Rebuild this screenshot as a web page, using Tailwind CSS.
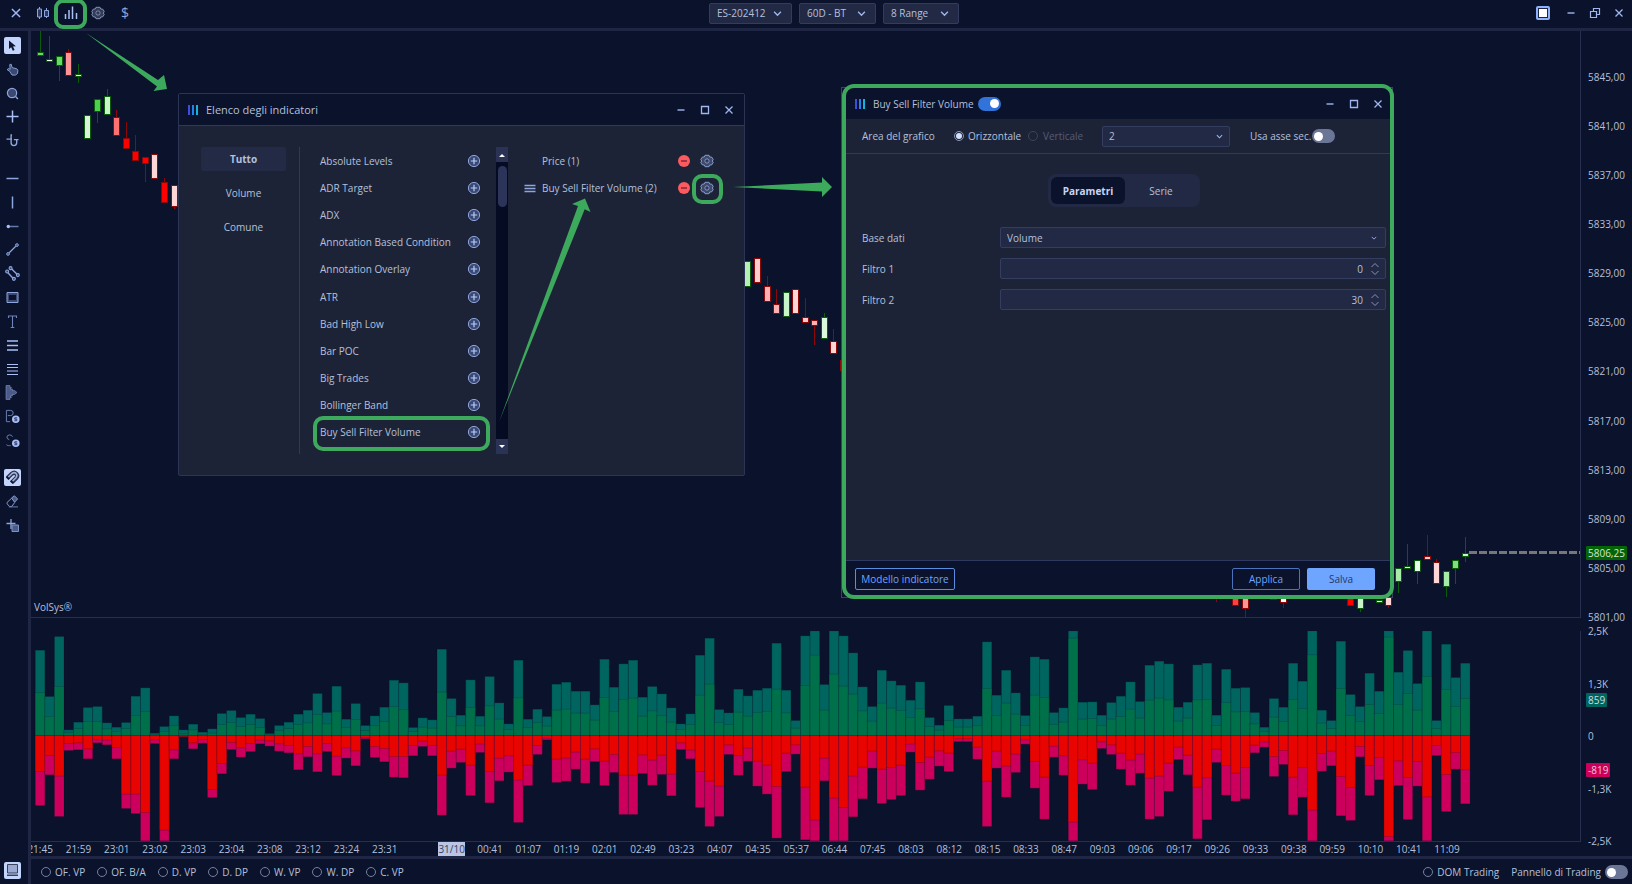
<!DOCTYPE html>
<html lang="it">
<head>
    <meta charset="UTF-8">
    <meta name="viewport" content="width=device-width, initial-scale=1.0">
    <title>VolSys</title>
    <script src="https://cdn.jsdelivr.net/npm/@tailwindcss/browser@4"></script>
</head>

<body class="relative flex h-screen flex-col overflow-hidden bg-[#0b122b] font-['Open_Sans','Noto_Sans',sans-serif] text-[10px] leading-[14px] text-[#b4c0dc]">

    <!-- shared icons -->
    <svg class="hidden">
        <symbol id="i-close" viewBox="0 0 12 12"><path d="M2.5 2.5l7 7M9.5 2.5l-7 7" fill="none" stroke="currentColor" stroke-width="1.3"/></symbol>
        <symbol id="i-min" viewBox="0 0 12 12"><path d="M2.5 6h7" fill="none" stroke="currentColor" stroke-width="1.4"/></symbol>
        <symbol id="i-max" viewBox="0 0 12 12"><path d="M2.5 2.5h7v7h-7z" fill="none" stroke="currentColor" stroke-width="1.3"/></symbol>
        <symbol id="i-down" viewBox="0 0 8 8"><path d="M1 2.5l3 3 3-3" fill="none" stroke="currentColor" stroke-width="1.2"/></symbol>
        <symbol id="i-gear" viewBox="0 0 14 14">
            <path d="M5 1.300h4l.8 1.700 2 .2 1.400 2.300-.9 1.500.9 1.500-1.400 2.300-2 .2-.8 1.700H5l-.8-1.700-2-.2L.8 8.500 1.700 7 .8 5.500l1.400-2.300 2-.2z" fill="currentColor" fill-opacity=".3" stroke="currentColor" stroke-width=".9" stroke-linejoin="round"/>
            <circle cx="7" cy="7" r="2.100" fill="#141a32" stroke="currentColor" stroke-width=".9"/>
            <circle cx="7" cy="7" r=".6" fill="currentColor"/>
        </symbol>
        <symbol id="i-add" viewBox="0 0 14 14">
            <circle cx="7" cy="7" r="5.6" fill="#3a4874" stroke="#8ea6de"/>
            <path d="M7 3.8v6.4M3.8 7h6.4" stroke="#b9cdfb" stroke-width="1.2"/>
        </symbol>
        <symbol id="i-remove" viewBox="0 0 14 14">
            <circle cx="7" cy="7" r="6" fill="#fb5a5f"/>
            <path d="M4 7h6" stroke="#7c2434" stroke-width="1.4"/>
        </symbol>
        <symbol id="i-logo" viewBox="0 0 12 12">
            <path d="M2 1v10" stroke="#3a4fe0" stroke-width="2"/>
            <path d="M6 1v10" stroke="#2383ea" stroke-width="2"/>
            <path d="M10 1v10" stroke="#12b4dc" stroke-width="2"/>
        </symbol>
    </svg>

    <header class="flex h-[31px] shrink-0 items-center border-b-[3px] border-[#1f2644] pb-[2px] text-[#9fb6ee]">
        <div class="flex w-[calc(50%-107px)] items-center pl-[9px]">
            <button aria-label="Chiudi" class="mr-[13px]"><svg class="size-[14px]"><use href="#i-close"/></svg></button>
            <button aria-label="Tipo grafico" class="mr-[14px]">
                <svg class="size-[14px]" viewBox="0 0 14 14"><path d="M3.5 1v12M10.5 2v10" stroke="#8ea6de"/><path d="M1.5 3h4v8h-4zM8.5 4.500h4v6h-4z" fill="#2c3a66" stroke="#8ea6de"/></svg>
            </button>
            <button aria-label="Indicatori" class="mr-[13px]">
                <svg class="size-[14px]" viewBox="0 0 14 14"><path d="M1.500 8v5M5 4v9M8.500 .5V13M12.500 7v6" stroke="#a9c0f7" stroke-width="1.500"/></svg>
            </button>
            <button aria-label="Impostazioni" class="mr-[13px] text-[#8f9bbd]"><svg class="size-[14px]"><use href="#i-gear"/></svg></button>
            <button aria-label="Conto" class="w-[14px] text-[14px] leading-[14px] text-[#8ea6de]">$</button>
        </div>
        <div class="flex gap-[7px]">
            <button class="flex h-[21px] w-[83px] items-center justify-between rounded-[2px] border border-[#333c5e] bg-[#222944] px-[7px] text-[#b4c0dc]">ES-202412 <svg class="mr-[2px] size-[9px] text-[#9fb6ee]"><use href="#i-down"/></svg></button>
            <button class="flex h-[21px] w-[77px] items-center justify-between rounded-[2px] border border-[#333c5e] bg-[#222944] px-[7px] text-[#b4c0dc]">60D - BT <svg class="mr-[2px] size-[9px] text-[#9fb6ee]"><use href="#i-down"/></svg></button>
            <button class="flex h-[21px] w-[76px] items-center justify-between rounded-[2px] border border-[#333c5e] bg-[#222944] px-[7px] text-[#b4c0dc]">8 Range <svg class="mr-[2px] size-[9px] text-[#9fb6ee]"><use href="#i-down"/></svg></button>
        </div>
        <div class="ml-auto flex items-center gap-3 pr-[7px]">
            <button aria-label="Layout" class="mr-[3px]"><svg class="size-[14px]" viewBox="0 0 14 14"><rect width="14" height="14" rx="2" fill="#8fb0fa"/><path d="M2 2h10v10H2z" fill="#1c2340"/><path d="M3 3h8v8H3z" fill="#fff"/></svg></button>
            <button aria-label="Riduci"><svg class="size-3"><use href="#i-min"/></svg></button>
            <button aria-label="Ripristina"><svg class="size-3" viewBox="0 0 12 12"><path d="M1.500 4.500h6v6h-6zM4.500 4V1.500h6v6H8" fill="none" stroke="currentColor" stroke-width="1.200"/></svg></button>
            <button aria-label="Chiudi finestra"><svg class="size-3"><use href="#i-close"/></svg></button>
        </div>
    </header>

    <div class="flex min-h-0 flex-1">

        <nav class="flex w-[31px] shrink-0 flex-col border-r-[3px] border-[#1f2644] pt-1 pb-[3px] pl-[2px] text-[#8ea6de]">
            <div class="flex h-[116px] flex-col justify-between">
                <button aria-label="Puntatore" class="grid size-[21px] place-items-center"><svg class="size-[17px]" viewBox="0 0 17 17"><rect width="17" height="17" rx="2" fill="#c3d5fd"/><path d="M5 3.500v8.500l2.200-1.800 1.600 3.500 1.800-.8-1.600-3.400 2.900-.3z" fill="#10162e"/></svg></button>
                <button aria-label="Mano" class="grid size-[21px] place-items-center"><svg class="size-[13px]" viewBox="0 0 14 14"><path d="M4 9L1.200 7.200 2.500 6l2 .8-.5-5 1.500-.6L6.600 5l5 1.200 1.200 1.600-.4 3.500-2.200 1.700H6.500z" fill="#3b4870" stroke="currentColor"/></svg></button>
                <button aria-label="Zoom" class="grid size-[21px] place-items-center"><svg class="size-[13px]" viewBox="0 0 14 14"><circle cx="6.500" cy="6.500" r="5" fill="#3b4870" stroke="currentColor" stroke-width="1.300"/><path d="M10.300 10.300l2.500 2.500" stroke="currentColor" stroke-width="1.500"/></svg></button>
                <button aria-label="Croce" class="grid size-[21px] place-items-center"><svg class="size-[13px]" viewBox="0 0 13 13"><path d="M6.500 .5v12M.5 6.500h12" stroke="#a9c0f7" stroke-width="1.500"/></svg></button>
                <button aria-label="Croce magnetica" class="grid size-[21px] place-items-center"><svg class="size-[13px]" viewBox="0 0 14 14"><path d="M.5 5.500h6M5.500 .5v9a3 3 0 0 0 6 0V6M8.500 6h5M5 1h1.500" fill="none" stroke="currentColor" stroke-width="1.500"/></svg></button>
            </div>
            <div class="mt-[17px] flex h-[283px] flex-col justify-between">
                <button aria-label="Linea orizzontale" class="grid size-[21px] place-items-center"><svg class="size-[13px]" viewBox="0 0 13 13"><path d="M.5 6.500h12" stroke="currentColor" stroke-width="1.500"/></svg></button>
                <button aria-label="Linea verticale" class="grid size-[21px] place-items-center"><svg class="size-[13px]" viewBox="0 0 13 13"><path d="M6.500 .5v12" stroke="currentColor" stroke-width="1.500"/></svg></button>
                <button aria-label="Semiretta" class="grid size-[21px] place-items-center"><svg class="size-[13px]" viewBox="0 0 13 13"><path d="M3 6.500h9.500" stroke="#6579ad" stroke-width="1.500"/><circle cx="2.300" cy="6.500" r="1.700" fill="#a9c0f7"/></svg></button>
                <button aria-label="Segmento" class="grid size-[21px] place-items-center"><svg class="size-[13px]" viewBox="0 0 14 14"><path d="M3.500 10.500l7-7" stroke="currentColor" stroke-width="1.300"/><circle cx="2.200" cy="11.800" r="1.500" fill="#3b4870" stroke="currentColor"/><circle cx="11.800" cy="2.200" r="1.500" fill="#3b4870" stroke="currentColor"/></svg></button>
                <button aria-label="Canale" class="grid size-[21px] place-items-center"><svg class="size-[15px]" viewBox="0 0 14 14"><path d="M2.500 6l5 5.500M6 2.500l5.500 5.500" stroke="currentColor" stroke-width="1.300"/><g fill="#3b4870" stroke="currentColor"><circle cx="2" cy="5.200" r="1.400"/><circle cx="8.300" cy="12" r="1.400"/><circle cx="5.200" cy="2" r="1.400"/><circle cx="12" cy="8.500" r="1.400"/></g></svg></button>
                <button aria-label="Rettangolo" class="grid size-[21px] place-items-center"><svg class="size-[13px]" viewBox="0 0 13 13"><path d="M1 1.500h11v10H1z" fill="#3b4870" stroke="currentColor"/><path d="M3 4h7v5H3z" fill="#0b122b"/></svg></button>
                <button aria-label="Testo" class="grid size-[21px] place-items-center"><svg class="size-[13px]" viewBox="0 0 13 13"><path d="M2.500 3V1h8v2M6.500 1v11.500M4.700 12.500h3.600" fill="none" stroke="#6f84bb" stroke-width="1.100"/></svg></button>
                <button aria-label="Livelli" class="grid size-[21px] place-items-center"><svg class="size-[13px]" viewBox="0 0 13 13"><path d="M1 2h11M1 6.500h11M1 11h11" stroke="#a9c0f7" stroke-width="1.400"/></svg></button>
                <button aria-label="Fibonacci" class="grid size-[21px] place-items-center"><svg class="size-[13px]" viewBox="0 0 13 13"><path d="M1 1.500h11M1 4.500h11M1 8h11M1 11.500h11" stroke="#a9c0f7" stroke-width="1.200"/></svg></button>
                <button aria-label="Profilo volume" class="grid size-[21px] place-items-center"><svg class="size-[15px]" viewBox="0 0 15 15"><path d="M1 .5h4v2h1.500L5 4h2.500L7 5.500h2.500L12 7.500 9.500 9.500H7l.5 1.500H5l1.500 1.500H5v2H1z" fill="#4c5a86" stroke="#7c92cc" stroke-width=".6"/></svg></button>
                <button aria-label="Compra" class="grid size-[21px] place-items-center"><svg class="size-[15px]" viewBox="0 0 16 16"><path d="M1.500 13.500v-12h4.500a2.700 2.700 0 0 1 0 5.500H3M1.500 13.500h4" fill="none" stroke="#6f84bb"/><circle cx="11.500" cy="11" r="4" fill="#a9c0f7"/><path d="M13 9.400h-2.600v1.500h2.200v1.600h-2.600" fill="none" stroke="#27345f"/></svg></button>
                <button aria-label="Vendi" class="grid size-[21px] place-items-center"><svg class="size-[15px]" viewBox="0 0 16 16"><path d="M8 4a3 2.500 0 1 0-3.500 3M1.500 12.500c1 1 3 1.200 4.500.8" fill="none" stroke="#6f84bb"/><circle cx="11.500" cy="11" r="4" fill="#a9c0f7"/><path d="M13 9.400h-2.600v1.500h2.200v1.600h-2.600" fill="none" stroke="#27345f"/></svg></button>
            </div>
            <div class="mt-4 flex h-[69px] flex-col justify-between">
                <button aria-label="Calamita" class="grid size-[21px] place-items-center"><svg class="size-[17px]" viewBox="0 0 17 17"><rect width="17" height="17" rx="2" fill="#c3d5fd"/><path d="M3.500 9l4.200-4.200c3.300-2.800 7.300 1 4.500 4.300L8 13.300" fill="none" stroke="#2b3252" stroke-width="4.200"/><path d="M4 8.500l4-4c3.300-2.300 6.300 1 4 4.300l-4 4" fill="none" stroke="#a3b0d4" stroke-width="1.600"/><path d="M2.500 7.600l2.600 2.600M6.700 11.700l2.600 2.600" stroke="#10162e" stroke-width="2"/></svg></button>
                <button aria-label="Gomma" class="grid size-[21px] place-items-center"><svg class="size-[13px]" viewBox="0 0 14 14"><path d="M6 3.200L9 .8l3.500 3.500-3.300 3.500z" fill="#4c5a86" stroke="currentColor"/><path d="M6 3.500L1.200 8v1.500L4 12.500h2L9.500 8" fill="none" stroke="currentColor"/><path d="M3 12.800h10" stroke="#6f84bb"/></svg></button>
                <button aria-label="Gestione oggetti" class="grid size-[21px] place-items-center"><svg class="size-[13px]" viewBox="0 0 13 13"><path d="M5 0v10M.5 4.500h9" stroke="currentColor" stroke-width="1.300"/><path d="M6 6h6.500v6.500H6z" fill="#4c5a86" stroke="#7c92cc"/></svg></button>
            </div>
            <button aria-label="Pannello" class="mt-auto grid size-[21px] place-items-center"><svg class="size-[17px]" viewBox="0 0 17 17"><rect width="17" height="17" rx="2" fill="#c3d5fd"/><path d="M3.500 2.500h10v8.500h-10z" fill="#9aa9d2" stroke="#39415f"/><path d="M3 12.500h11V14H3z" fill="#39415f"/></svg></button>
        </nav>

        <main class="flex min-w-0 flex-1 flex-col">
            <div class="flex min-h-0 flex-1">
                <div class="flex min-w-0 flex-1 flex-col">
                    <section class="relative min-h-0 flex-1 border-r border-b border-[#262f50]">
                        <svg id="price" class="absolute size-full" viewBox="31 31 1549 586" preserveAspectRatio="none" shape-rendering="crispEdges">
                            <path d="M1469 552.500H1580" stroke="#77777a" stroke-width="3" stroke-dasharray="8 2"/>
                        </svg>
                        <p class="absolute bottom-[3px] left-[3px]">VolSys®</p>
                    </section>
                    <section class="pt-[13px]">
                        <svg id="volume" class="h-[211px] w-full border-r border-b border-[#262f50]" viewBox="31 631 1549 210" preserveAspectRatio="none"></svg>
                    </section>
                    <div class="h-[14px] overflow-hidden">
                        <div id="times" class="-ml-[10px] flex leading-[14px]"></div>
                    </div>
                </div>
                <div class="flex w-[51px] shrink-0 flex-col pb-2">
                    <div class="relative min-h-0 flex-1">
                        <ul id="prices" class="flex h-full flex-col justify-between pt-[39px] pl-[7px]"></ul>
                        <span class="absolute top-[515px] left-[5px] rounded-[1px] bg-[#056405] px-[2px] text-[#d3e6d3]">5806,25</span>
                    </div>
                    <div class="relative">
                        <ul class="flex h-[224px] flex-col justify-between pl-[7px]">
                            <li>2,5K</li>
                            <li>1,3K</li>
                            <li>0</li>
                            <li>-1,3K</li>
                            <li>-2,5K</li>
                        </ul>
                        <span class="absolute top-[69px] left-[5px] rounded-[1px] bg-[#00645f] px-[2px] text-[#c9dde0]">859</span>
                        <span class="absolute top-[139px] left-[5px] rounded-[1px] bg-[#cc005c] px-[2px] text-[#f0c4d8]">-819</span>
                    </div>
                </div>
            </div>

            <footer class="flex h-[28px] shrink-0 items-center border-t-[3px] border-[#1f2644] pr-1 pl-[10px] pt-[1px]">
                <div id="profiles" class="flex gap-3"></div>
                <label class="mr-3 ml-auto flex items-center gap-1"><input type="radio" name="dom" class="size-[10px] appearance-none rounded-full border border-[#7480a3]">DOM Trading</label>
                <label class="flex items-center gap-1">Pannello di Trading
                    <input type="checkbox" class="flex h-[14px] w-[23px] appearance-none items-center rounded-full bg-[#6b7697] px-[2px] before:size-[9px] before:rounded-full before:bg-white">
                </label>
            </footer>
        </main>
    </div>

    <!-- indicator list window -->
    <section class="absolute top-[93px] left-[178px] flex h-[383px] w-[567px] flex-col rounded-[2px] border border-[#2b3454] bg-[#1d2337]">
        <div class="flex h-8 shrink-0 items-center border-b border-[#2f3960] bg-[#0b122b] pr-[9px] pl-[8px]">
            <svg class="size-3"><use href="#i-logo"/></svg>
            <h2 class="ml-[7px] text-[11px]">Elenco degli indicatori</h2>
            <div class="ml-auto flex gap-3 text-[#9fb6ee]">
                <button aria-label="Riduci"><svg class="size-3"><use href="#i-min"/></svg></button>
                <button aria-label="Ingrandisci"><svg class="size-3"><use href="#i-max"/></svg></button>
                <button aria-label="Chiudi"><svg class="size-3"><use href="#i-close"/></svg></button>
            </div>
        </div>
        <div class="flex min-h-0 flex-1 pt-[21px] pb-[21px] pl-[22px]">
            <div class="flex w-[99px] flex-col gap-[10px] border-r border-[#2f3858] pr-[13px]">
                <button class="h-6 rounded-[2px] bg-[#232a45] font-bold">Tutto</button>
                <button class="h-6">Volume</button>
                <button class="h-6">Comune</button>
            </div>
            <ul id="indicators" class="ml-5 flex h-[299px] w-[161px] flex-col"></ul>
            <div class="ml-[15px] flex w-3 flex-col bg-[#060b24]">
                <button aria-label="Su" class="grid h-[15px] place-items-center bg-[#2a3356]"><svg class="size-[6px]" viewBox="0 0 6 6"><path d="M0 5l3-3 3 3z" fill="#fff"/></svg></button>
                <div class="mx-auto mt-1 h-[41px] w-[9px] rounded-full bg-[#2c3559]"></div>
                <button aria-label="Giù" class="mt-auto grid h-[15px] place-items-center bg-[#2a3356]"><svg class="size-[6px]" viewBox="0 0 6 6"><path d="M0 1l3 3 3-3z" fill="#fff"/></svg></button>
            </div>
            <ul class="ml-4 w-[190px]">
                <li class="flex h-[27px] items-center pl-[18px]">
                    Price (1)
                    <button aria-label="Rimuovi" class="ml-auto"><svg class="size-[14px]"><use href="#i-remove"/></svg></button>
                    <button aria-label="Impostazioni" class="ml-[9px] text-[#8ea6de]"><svg class="size-[14px]"><use href="#i-gear"/></svg></button>
                </li>
                <li class="flex h-[27px] items-center">
                    <svg class="mr-[6px] size-3" viewBox="0 0 12 12"><path d="M.5 3.500h11M.5 6.500h11M.5 9.500h11" stroke="#8ea6de" stroke-width="1.300"/></svg>
                    Buy Sell Filter Volume (2)
                    <button aria-label="Rimuovi" class="ml-auto"><svg class="size-[14px]"><use href="#i-remove"/></svg></button>
                    <button aria-label="Impostazioni" class="ml-[9px] text-[#8ea6de]"><svg class="size-[14px]"><use href="#i-gear"/></svg></button>
                </li>
            </ul>
        </div>
    </section>

    <!-- indicator settings window -->
    <section class="absolute top-[87px] left-[841px] flex h-[511px] w-[552px] flex-col border border-[#3a4360] bg-[#1d2337]">
        <div class="flex h-[31px] shrink-0 items-center bg-[#0b122b] pr-[8px] pl-3">
            <svg class="size-3"><use href="#i-logo"/></svg>
            <label for="enabled" class="ml-[7px]">Buy Sell Filter Volume</label>
            <input id="enabled" type="checkbox" checked class="ml-1 flex h-[14px] w-[23px] appearance-none items-center justify-end rounded-full bg-[#3173d8] px-[2px] before:size-[9px] before:rounded-full before:bg-white">
            <div class="ml-auto flex gap-3 text-[#9fb6ee]">
                <button aria-label="Riduci"><svg class="size-3"><use href="#i-min"/></svg></button>
                <button aria-label="Ingrandisci"><svg class="size-3"><use href="#i-max"/></svg></button>
                <button aria-label="Chiudi"><svg class="size-3"><use href="#i-close"/></svg></button>
            </div>
        </div>
        <div class="flex h-[35px] shrink-0 items-center border-b border-[#2f3960] pl-5">
            <span class="w-[92px]">Area del grafico</span>
            <label class="flex w-[74px] items-center gap-1"><input type="radio" name="area" checked class="grid size-[10px] appearance-none place-items-center rounded-full border border-[#8b96b5] before:size-[6px] before:rounded-full before:bg-[#d5e0ff]">Orizzontale</label>
            <label class="flex w-[74px] items-center gap-[5px] text-[#545c76]"><input type="radio" name="area" disabled class="size-[10px] appearance-none rounded-full border border-[#3b435e]">Verticale</label>
            <div class="flex h-[21px] w-[128px] items-center rounded-[2px] border border-[#333d60] bg-[#222944] px-[6px]">
                <select aria-label="Area" class="flex-1 appearance-none bg-transparent"><option>2</option></select>
                <svg class="size-[7px] text-[#9fb6ee]"><use href="#i-down"/></svg>
            </div>
            <label class="ml-5 flex items-center gap-[1px]">Usa asse sec.
                <input type="checkbox" class="flex h-[14px] w-[23px] appearance-none items-center rounded-full bg-[#6b7697] px-[2px] before:size-[9px] before:rounded-full before:bg-white">
            </label>
        </div>
        <div class="flex-1 pr-[6px] pl-5">
            <div class="mx-auto mt-5 flex w-[152px] rounded-[8px] bg-[#222944] p-[3px]">
                <button class="h-[27px] w-[74px] rounded-[6px] bg-[#0b122b] font-bold text-[#c9d5f2]">Parametri</button>
                <button class="h-[27px] flex-1">Serie</button>
            </div>
            <div class="mt-5 grid grid-cols-[138px_1fr] items-center gap-y-[10px]">
                <label for="base">Base dati</label>
                <div class="flex h-[21px] items-center rounded-[2px] border border-[#333d60] bg-[#222944] pr-[8px] pl-[6px]">
                    <select id="base" class="flex-1 appearance-none bg-transparent"><option>Volume</option></select>
                    <svg class="size-[6px] text-[#9fb6ee]"><use href="#i-down"/></svg>
                </div>
                <label for="f1">Filtro 1</label>
                <div class="flex h-[21px] items-center rounded-[2px] border border-[#333d60] bg-[#222944] pr-[6px]">
                    <input id="f1" value="0" inputmode="numeric" class="min-w-0 flex-1 bg-transparent pr-[8px] text-right">
                    <svg class="h-3 w-[8px]" viewBox="0 0 8 12"><path d="M.5 4l3.500-3.500L7.500 4M.5 8L4 11.500 7.500 8" fill="none" stroke="#8592b8"/></svg>
                </div>
                <label for="f2">Filtro 2</label>
                <div class="flex h-[21px] items-center rounded-[2px] border border-[#333d60] bg-[#222944] pr-[6px]">
                    <input id="f2" value="30" inputmode="numeric" class="min-w-0 flex-1 bg-transparent pr-[8px] text-right">
                    <svg class="h-3 w-[8px]" viewBox="0 0 8 12"><path d="M.5 4l3.500-3.500L7.500 4M.5 8L4 11.500 7.500 8" fill="none" stroke="#8592b8"/></svg>
                </div>
            </div>
        </div>
        <div class="flex h-[37px] shrink-0 gap-[7px] border-t border-[#2f3960] bg-[#0b122b] pt-[7px] pr-[17px] pl-[13px] text-[#6ea5ff]">
            <button class="mr-auto h-[22px] w-[100px] rounded-[2px] border border-[#5a8de0]">Modello indicatore</button>
            <button class="h-[22px] w-[68px] rounded-[2px] border border-[#4a73bb]">Applica</button>
            <button class="h-[22px] w-[68px] rounded-[2px] bg-[#6ea5ff] text-[#26365f]">Salva</button>
        </div>
    </section>

    <!-- highlights and arrows -->
    <div class="pointer-events-none absolute -top-px left-[54px] h-[30px] w-[33px] rounded-[9px] border-4 border-[#3da95c]"></div>
    <div class="pointer-events-none absolute top-[416px] left-[313px] h-[35px] w-[177px] rounded-[10px] border-4 border-[#3da95c]"></div>
    <div class="pointer-events-none absolute top-[174px] left-[692px] h-[30px] w-[31px] rounded-[10px] border-4 border-[#3da95c]"></div>
    <div class="pointer-events-none absolute top-[84px] left-[842px] h-[515px] w-[552px] rounded-[12px] border-4 border-[#3da95c]"></div>
    <svg class="pointer-events-none absolute top-0 left-0 h-[500px] w-[850px]" viewBox="0 0 850 500" fill="#3da95c">
        <path d="M86 33L158 80l6-5 3 14-13.500 2 3.500-4.500z"/>
        <path d="M499 422L578 206l-6-2 13-5.500 5.500 13.500-5.800-2.700z"/>
        <path d="M733 187L822 182.500V177l10 10-10 10v-5.500z"/>
    </svg>

    <script>
        const ns = "http://www.w3.org/2000/svg";
        const step = 9.565, left = 35.3;

        function rect(svg, x, y, w, h, fill, stroke) {
            const r = document.createElementNS(ns, "rect");
            r.setAttribute("x", x);
            r.setAttribute("y", y);
            r.setAttribute("width", w);
            r.setAttribute("height", h);
            r.setAttribute("fill", fill);
            if (stroke) r.setAttribute("stroke", stroke);
            svg.appendChild(r);
        }

        // slot, body top, body bottom, wick top, wick bottom, fill, up
        const candles = [
            [0, 52, 55, 30, 55, "#66d966", 1], [1, 59, 61, 36, 61, "#e6ffe6", 1], [2, 56, 65, 56, 81, "#66d966", 1],
            [3, 52, 75, 49, 75, "#ff9494", 0], [4, 74, 76, 64, 83, "#e6ffe6", 1], [5, 115, 138, 115, 138, "#d9f5d9", 1],
            [6, 99, 111, 99, 123, "#4dd04d", 1], [7, 96, 114, 89, 114, "#c8f5c8", 1], [8, 117, 135, 110, 135, "#ff7070", 0],
            [9, 138, 148, 122, 148, "#ff0000", 0], [10, 151, 160, 135, 160, "#ff0000", 0], [11, 157, 163, 157, 182, "#ff0000", 0],
            [12, 154, 178, 154, 178, "#ffd6d6", 0], [13, 182, 202, 178, 202, "#ff0000", 0], [14, 185, 206, 185, 209, "#ffd6d6", 0],
            [74, 261, 286, 261, 286, "#b5efb5", 1], [75, 258, 282, 258, 282, "#ffcfcf", 0], [76, 286, 301, 276, 301, "#ffb0b0", 0],
            [77, 304, 313, 289, 313, "#ffb0b0", 0], [78, 292, 316, 292, 316, "#c8f5c8", 1], [79, 289, 313, 289, 313, "#ffd6d6", 0],
            [80, 317, 322, 298, 322, "#ffc8c8", 0], [81, 320, 325, 320, 345, "#ffb0b0", 0], [82, 317, 338, 313, 338, "#daf8da", 1],
            [83, 341, 353, 329, 353, "#ffd6d6", 0], [84, 360, 370, 356, 381, "#ff7070", 0], [123, 580, 590, 580, 602, "#ff0000", 0],
            [125, 590, 605, 590, 605, "#ff4040", 0], [126, 590, 608, 590, 617, "#ff9494", 0], [129, 590, 599, 590, 599, "#ff4040", 0],
            [130, 590, 602, 590, 608, "#ffffff", 0], [137, 590, 605, 590, 605, "#ff0000", 0], [138, 590, 608, 590, 612, "#c8f5c8", 1],
            [140, 600, 602, 600, 602, "#e6ffe6", 1], [141, 590, 605, 590, 608, "#ffd6d6", 0], [142, 568, 581, 568, 593, "#a8eaa8", 1],
            [143, 566, 568, 544, 568, "#e6ffe6", 1], [144, 560, 571, 560, 584, "#e6ffe6", 1], [145, 556, 559, 535, 559, "#ffc8c8", 0],
            [146, 562, 583, 559, 583, "#ffd6d6", 0], [147, 571, 586, 571, 597, "#a8eaa8", 1], [148, 560, 568, 560, 584, "#80dd80", 1],
            [149, 553, 556, 537, 562, "#c8f5c8", 1]
        ];
        for (const [i, top, bottom, high, low, fill, up] of candles) {
            const x = Math.round(left + i * step + 4.3);
            const edge = up ? "#0a5c0a" : "#8c0808";
            rect(price, x, high, 1, low - high, edge);
            rect(price, x - 2.5, top + .5, 6, bottom - top, fill, edge);
        }

        // buy, buy filtered, sell filtered, sell (one unit = 8 contracts)
        const bars = [
            [256,129,108,210],[117,57,60,118],[297,147,122,243],[17,9,24,45],[40,21,22,43],[84,42,40,70],[87,42,13,22],[38,20,14,28],[25,12,36,70],[39,21,176,219],
            [118,60,176,234],[143,72,231,316],[7,3,13,24],[27,12,284,316],[59,30,43,70],[17,5,3,3],[34,17,22,40],[10,3,12,23],[20,7,162,186],[66,33,84,115],
            [75,39,21,42],[54,27,37,65],[64,33,24,48],[51,24,14,25],[6,3,16,32],[30,15,25,47],[40,21,30,52],[64,33,55,103],[76,38,33,64],[126,63,55,109],
            [69,35,24,48],[148,73,62,120],[49,24,37,68],[96,48,46,91],[30,15,6,10],[59,30,33,66],[85,42,39,79],[166,87,63,125],[158,78,63,127],[24,12,30,61],
            [53,25,17,33],[47,22,30,61],[259,130,119,239],[111,57,47,98],[61,29,41,81],[167,84,89,180],[58,29,26,51],[177,89,108,202],[98,49,68,136],[35,18,61,110],
            [226,113,134,261],[49,24,89,150],[79,39,30,57],[57,28,8,13],[154,76,71,141],[160,79,68,137],[133,67,50,101],[133,67,71,143],[92,46,40,78],[229,114,77,150],
            [145,72,57,111],[215,108,119,237],[226,112,119,237],[115,58,58,114],[147,74,74,149],[125,60,59,117],[83,40,116,181],[35,18,22,42],[65,33,44,70],[241,121,108,216],
            [292,154,137,273],[78,39,152,243],[68,33,28,57],[139,70,60,119],[119,58,38,77],[136,69,77,152],[142,72,89,176],[277,139,153,308],[136,68,53,108],[45,22,28,56],
            [299,150,155,313],[314,241,254,316],[153,76,68,136],[314,184,188,316],[299,148,216,316],[248,124,122,244],[146,74,95,190],[87,43,47,98],[196,97,101,204],[164,82,96,192],
            [151,75,89,180],[106,54,26,50],[161,80,81,164],[54,27,65,131],[31,16,46,92],[90,45,53,108],[50,25,10,18],[50,25,10,18],[58,30,35,71],[281,141,137,273],
            [121,60,47,98],[196,97,92,185],[128,64,56,111],[60,30,13,26],[236,121,78,158],[229,114,125,251],[69,33,32,65],[83,40,61,119],[314,292,260,316],[100,49,73,146],
            [101,51,83,162],[61,30,19,39],[99,49,28,57],[118,57,53,101],[161,79,74,149],[102,52,56,113],[211,106,128,251],[223,112,122,243],[215,107,83,167],[85,43,35,72],
            [100,52,59,118],[212,107,155,310],[217,108,127,253],[61,30,41,81],[199,99,90,179],[142,71,113,197],[144,72,96,190],[69,35,29,52],[25,12,19,35],[111,55,63,123],
            [85,42,45,87],[217,108,125,238],[163,81,96,185],[314,242,224,316],[76,37,54,107],[45,21,47,91],[283,141,123,241],[123,60,156,255],[87,42,33,64],[187,93,90,180],
            [133,66,66,133],[314,295,303,316],[190,93,76,150],[255,126,126,252],[156,76,78,152],[314,177,184,316],[45,21,30,60],[274,138,117,228],[174,87,51,101],[217,111,103,205]
        ];
        const zero = 735.5;
        bars.forEach(([buy, buyF, sellF, sell], i) => {
            const x = left + i * step;
            rect(volume, x, zero - buy / 3, step, buy / 3, "#00645f", "#0b122b33");
            rect(volume, x, zero - buyF / 3, step, buyF / 3, "#00704a", "#0b122b33");
            rect(volume, x, zero, step, sell / 3, "#cc005c", "#0b122b33");
            rect(volume, x, zero, step, sellF / 3, "#e80400", "#0b122b33");
        });

        for (let p = 5845; p >= 5801; p -= 4) {
            prices.innerHTML += `<li>${p},00</li>`;
        }

        const night = "21:45 21:59 23:01 23:02 23:03 23:04 23:08 23:12 23:24 23:31".split(" ");
        const day = "31/10 00:41 01:07 01:19 02:01 02:49 03:23 04:07 04:35 05:37 06:44 07:45 08:03 08:12 08:15 08:33 08:47 09:03 09:06 09:17 09:26 09:33 09:38 09:59 10:10 10:41 11:09".split(" ");
        const label = t => `<span class="min-w-0 flex-[4] text-center">${t.includes("/") ? `<mark class="bg-[#b9c6e6] text-[#39415f]">${t}</mark>` : t}</span>`;
        times.innerHTML = night.map(label).join("") + `<span class="flex-[3]"></span>` + day.map(label).join("") + `<span class="flex-[12]"></span>`;

        const names = ["Absolute Levels", "ADR Target", "ADX", "Annotation Based Condition", "Annotation Overlay", "ATR", "Bad High Low", "Bar POC", "Big Trades", "Bollinger Band", "Buy Sell Filter Volume"];
        indicators.innerHTML = names.map(n => `
            <li class="flex flex-1 items-center justify-between">${n}
                <button aria-label="Aggiungi ${n}"><svg class="size-[14px]"><use href="#i-add"/></svg></button>
            </li>`).join("");

        profiles.innerHTML = ["OF. VP", "OF. B/A", "D. VP", "D. DP", "W. VP", "W. DP", "C. VP"].map(n => `
            <label class="flex items-center gap-1"><input type="radio" name="profile" class="size-[10px] appearance-none rounded-full border border-[#7480a3]">${n}</label>`).join("");
    </script>
</body>
</html>
